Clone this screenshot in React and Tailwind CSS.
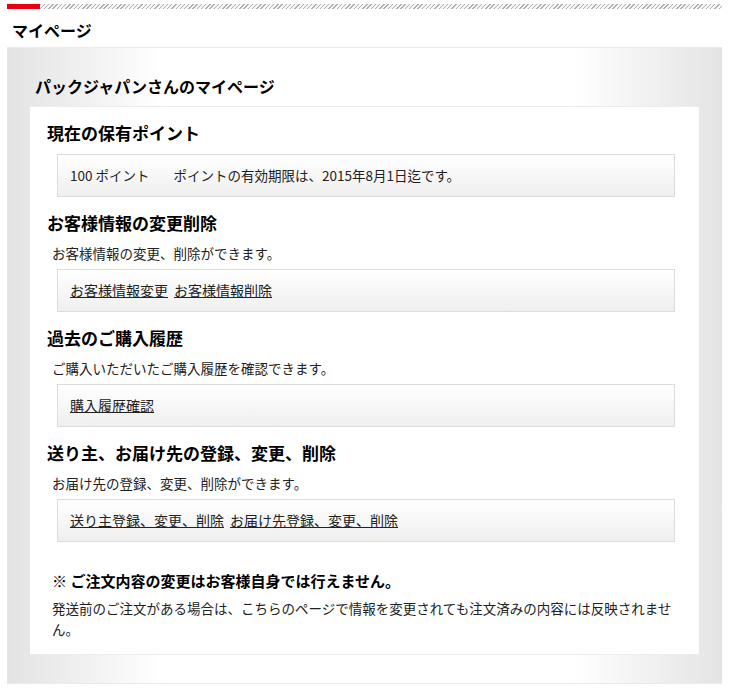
import React from "react";

const font = { fontFamily: '"Noto Sans CJK JP", "Noto Sans", sans-serif' };

function Box({ children }) {
  return (
    <div className="ml-[10px] mr-[24px] h-[43px] flex items-center pl-[12px] border border-[#dcdcdc] bg-[linear-gradient(to_bottom,#ffffff,#efefef)] text-[14px] text-[#222]">
      {children}
    </div>
  );
}

function Heading({ children, first }) {
  return (
    <h3 className={`${first ? "" : "mt-[14px]"} text-[17px] leading-[24px] font-bold text-black`}>
      {children}
    </h3>
  );
}

function Desc({ children }) {
  return <p className="mt-2 ml-[5px] text-[13.5px] leading-[20px] text-[#222]">{children}</p>;
}

function Link({ children }) {
  return <a href="#" className="underline text-[#222]">{children}</a>;
}

export default function App() {
  return (
    <div className="w-[730px] min-h-[691px] bg-white" style={font}>
      <div className="pt-[4px] px-[7px] w-[730px]">
        <div className="h-[5px] w-[715px] flex">
          <div className="w-[33px] bg-[#e60012]" />
          <div className="flex-1 bg-[repeating-linear-gradient(135deg,#b0b0b0_0_1px,#f6f6f6_1px_3px)]" />
        </div>
      </div>
      <h1 className="mt-[11px] ml-[12px] text-[16px] leading-[20px] font-bold text-black">マイページ</h1>
      <div className="mt-[7px] ml-[7px] w-[715px] border-t border-b border-[#ebebeb] bg-[linear-gradient(to_right,#e3e3e3,#ffffff_22%,#ffffff_79%,#e4e4e4)] pt-[26px] pb-[28px] px-[23px]">
        <h2 className="ml-[5px] text-[16px] leading-[24px] font-bold text-black">パックジャパンさんのマイページ</h2>
        <div className="mt-[8px] bg-white border-t border-b border-[#ececec] pt-[14px] pb-[14px] pl-[17px]">
          <Heading first>現在の保有ポイント</Heading>
          <div className="mt-[9px]">
            <Box>
              <span className="text-[13.5px]">100 ポイント</span>
              <span className="ml-[24px] text-[13.5px]">ポイントの有効期限は、2015年8月1日迄です。</span>
            </Box>
          </div>

          <Heading>お客様情報の変更削除</Heading>
          <Desc>お客様情報の変更、削除ができます。</Desc>
          <div className="mt-[6px]">
            <Box>
              <Link>お客様情報変更</Link>
              <span className="w-[6px]" />
              <Link>お客様情報削除</Link>
            </Box>
          </div>

          <Heading>過去のご購入履歴</Heading>
          <Desc>ご購入いただいたご購入履歴を確認できます。</Desc>
          <div className="mt-[6px]">
            <Box>
              <Link>購入履歴確認</Link>
            </Box>
          </div>

          <Heading>送り主、お届け先の登録、変更、削除</Heading>
          <Desc>お届け先の登録、変更、削除ができます。</Desc>
          <div className="mt-[6px]">
            <Box>
              <Link>送り主登録、変更、削除</Link>
              <span className="w-[6px]" />
              <Link>お届け先登録、変更、削除</Link>
            </Box>
          </div>

          <div className="mt-[29px] ml-[5px] mr-[22px]">
            <p className="text-[15px] leading-[20px] font-bold text-black">※ ご注文内容の変更はお客様自身では行えません。</p>
            <p className="mt-[7px] text-[13.5px] leading-[21px] text-[#222]">
              発送前のご注文がある場合は、こちらのページで情報を変更されても注文済みの内容には反映されません。
            </p>
          </div>
        </div>
      </div>
    </div>
  );
}
